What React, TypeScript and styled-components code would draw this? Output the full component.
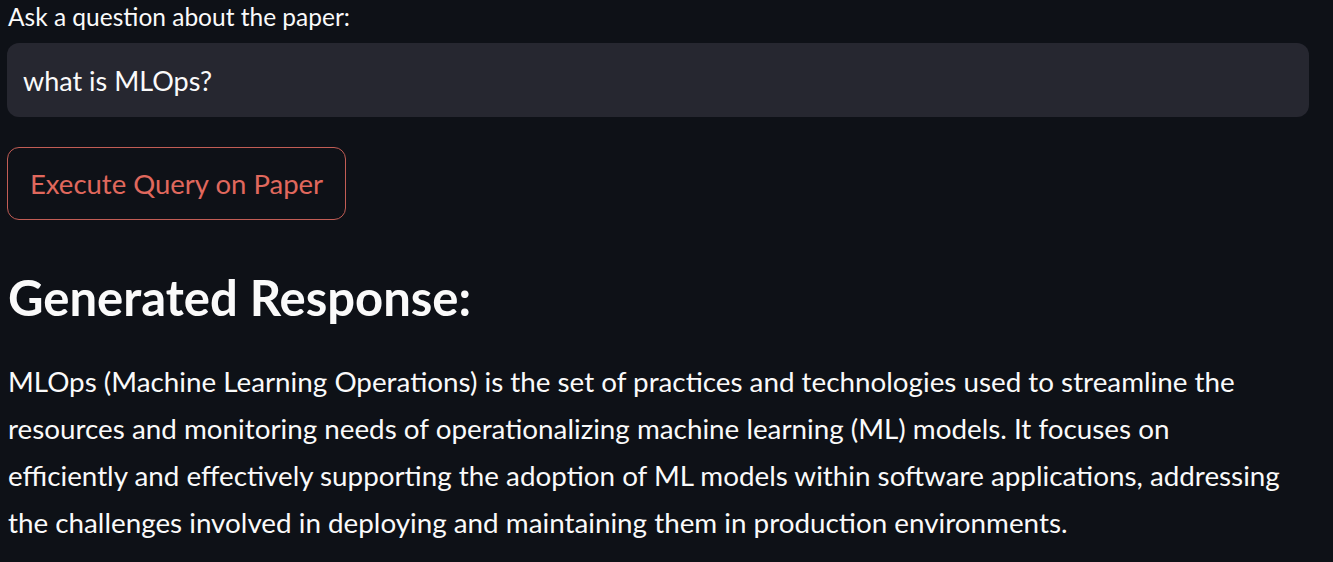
import React from "react";
import styled, { createGlobalStyle } from "styled-components";

const GlobalStyle = createGlobalStyle`
  html, body {
    margin: 0;
    padding: 0;
    background: #0e1117;
  }
  body {
    font-family: Lato, "Noto Sans", sans-serif;
    color: #fafafa;
  }
`;

const Page = styled.div`
  width: 1302px;
  padding: 0 0 0 7px;
  display: flex;
  flex-direction: column;
`;

const Label = styled.label`
  font-size: 24.5px;
  line-height: 34px;
  margin: 0 0 0 1px;
  color: #fafafa;
`;

const Input = styled.input`
  margin-top: 9px;
  height: 74px;
  box-sizing: border-box;
  border: 0;
  outline: none;
  border-radius: 12px;
  background: #262730;
  color: #fafafa;
  font-family: inherit;
  font-size: 27px;
  padding: 0 16px;
`;

const Button = styled.button`
  margin-top: 30px;
  align-self: flex-start;
  width: 339px;
  height: 73px;
  box-sizing: border-box;
  border: 1.5px solid #c25d55;
  border-radius: 12px;
  background: #0e1117;
  color: #e0685d;
  font-family: inherit;
  font-size: 27.5px;
  cursor: pointer;
`;

const Heading = styled.h3`
  margin: 47px 0 0 1px;
  font-size: 49px;
  line-height: 60px;
  font-weight: 700;
  color: #fafafa;
`;

const Paragraph = styled.p`
  margin: 31px 0 0 1px;
  max-width: 1280px;
  font-size: 27.8px;
  line-height: 47px;
  color: #fafafa;
`;

export default function App() {
  return (
    <>
      <GlobalStyle />
      <Page>
        <Label>Ask a question about the paper:</Label>
        <Input defaultValue="what is MLOps?" />
        <Button>Execute Query on Paper</Button>
        <Heading>Generated Response:</Heading>
        <Paragraph>
          MLOps (Machine Learning Operations) is the set of practices and technologies used to
          streamline the resources and monitoring needs of operationalizing machine learning (ML)
          models. It focuses on efficiently and effectively supporting the adoption of ML models
          within software applications, addressing the challenges involved in deploying and
          maintaining them in production environments.
        </Paragraph>
      </Page>
    </>
  );
}
